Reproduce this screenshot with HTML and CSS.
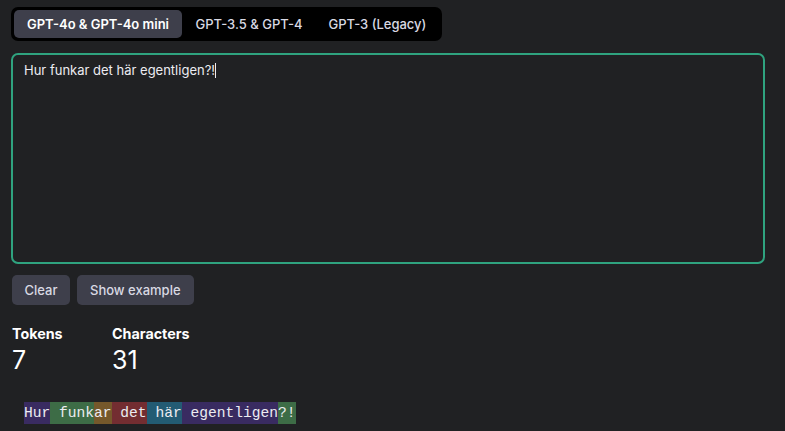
FILE: index.html
```html
<!DOCTYPE html>
<html lang="sv">
<head>
<meta charset="utf-8">
<link rel="stylesheet" href="styles.css">
</head>
<body>
<div class="page">
  <div class="tabs">
    <button class="tab active">GPT-4o &amp; GPT-4o mini</button>
    <button class="tab">GPT-3.5 &amp; GPT-4</button>
    <button class="tab">GPT-3 (Legacy)</button>
  </div>
  <div class="editor"><span class="editor-text">Hur funkar det här egentligen?!</span><span class="caret"></span></div>
  <div class="actions">
    <button class="btn">Clear</button>
    <button class="btn">Show example</button>
  </div>
  <div class="stats">
    <div class="stat">
      <div class="stat-label">Tokens</div>
      <div class="stat-value">7</div>
    </div>
    <div class="stat">
      <div class="stat-label">Characters</div>
      <div class="stat-value">31</div>
    </div>
  </div>
  <div class="tokens"><span class="t t1">Hur</span><span class="t t2"> funk</span><span class="t t3">ar</span><span class="t t4"> det</span><span class="t t5"> här</span><span class="t t1"> egentligen</span><span class="t t2">?!</span></div>
</div>
</body>
</html>
```

FILE: styles.css
```css
* { box-sizing: border-box; }
html, body {
  margin: 0;
  padding: 0;
  background: #202123;
  width: 785px;
  height: 431px;
  overflow: hidden;
}
body {
  font-family: Inter, "Noto Sans", sans-serif;
  color: #ececf1;
}
.page {
  padding: 7px 20px 0 11px;
  display: flex;
  flex-direction: column;
  align-items: flex-start;
}
.tabs {
  display: flex;
  gap: 1px;
  background: #000;
  border-radius: 7px;
  padding: 3px;
  margin-left: 0;
}
.tab {
  flex: none;
  white-space: nowrap;
  font-family: inherit;
  font-size: 13px;
  font-weight: 500;
  color: #d9d9e3;
  background: transparent;
  border: 0;
  border-radius: 5px;
  height: 28px;
  padding: 0 12.5px;
}
.tab.active {
  background: #3e3f4b;
  color: #fff;
  font-weight: 600;
  padding: 0 13px;
}
.editor {
  margin-top: 12px;
  width: 754px;
  height: 211px;
  border: 2px solid #2fa37f;
  border-radius: 7px;
  padding: 7px 11px;
  font-size: 13px;
  line-height: 16px;
  color: #ececf1;
  display: flex;
  align-items: flex-start;
}
.caret {
  display: inline-block;
  width: 1px;
  height: 15px;
  background: #ececf1;
  margin-top: 1px;
}
.actions {
  display: flex;
  gap: 7px;
  margin-top: 11px;
  margin-left: 1px;
}
.btn {
  font-family: inherit;
  font-size: 13px;
  font-weight: 500;
  color: #d9d9e3;
  background: #3e3f4b;
  border: 0;
  border-radius: 5px;
  height: 30px;
  padding: 0 12.5px;
}
.btn + .btn { padding: 0 13px; }
.stats {
  display: flex;
  margin-top: 21px;
  margin-left: 1px;
}
.stat { width: 100px; }
.stat-label {
  font-size: 14.3px;
  font-weight: 700;
  color: #fff;
  line-height: 16px;
}
.stat-value {
  font-size: 25px;
  font-weight: 400;
  color: #fff;
  line-height: 30px;
  margin-top: 3px;
}
.tokens {
  margin-top: 27px;
  margin-left: 13px;
  font-family: "Liberation Mono", monospace;
  font-size: 14.6px;
  line-height: 22px;
  white-space: pre;
  color: #ececf1;
}
.t { display: inline-block; height: 22px; }
.t1 { background: rgba(107, 64, 216, 0.35); }
.t2 { background: rgba(104, 222, 122, 0.4); }
.t3 { background: rgba(244, 172, 54, 0.4); }
.t4 { background: rgba(239, 65, 70, 0.4); }
.t5 { background: rgba(39, 181, 234, 0.4); }
```
